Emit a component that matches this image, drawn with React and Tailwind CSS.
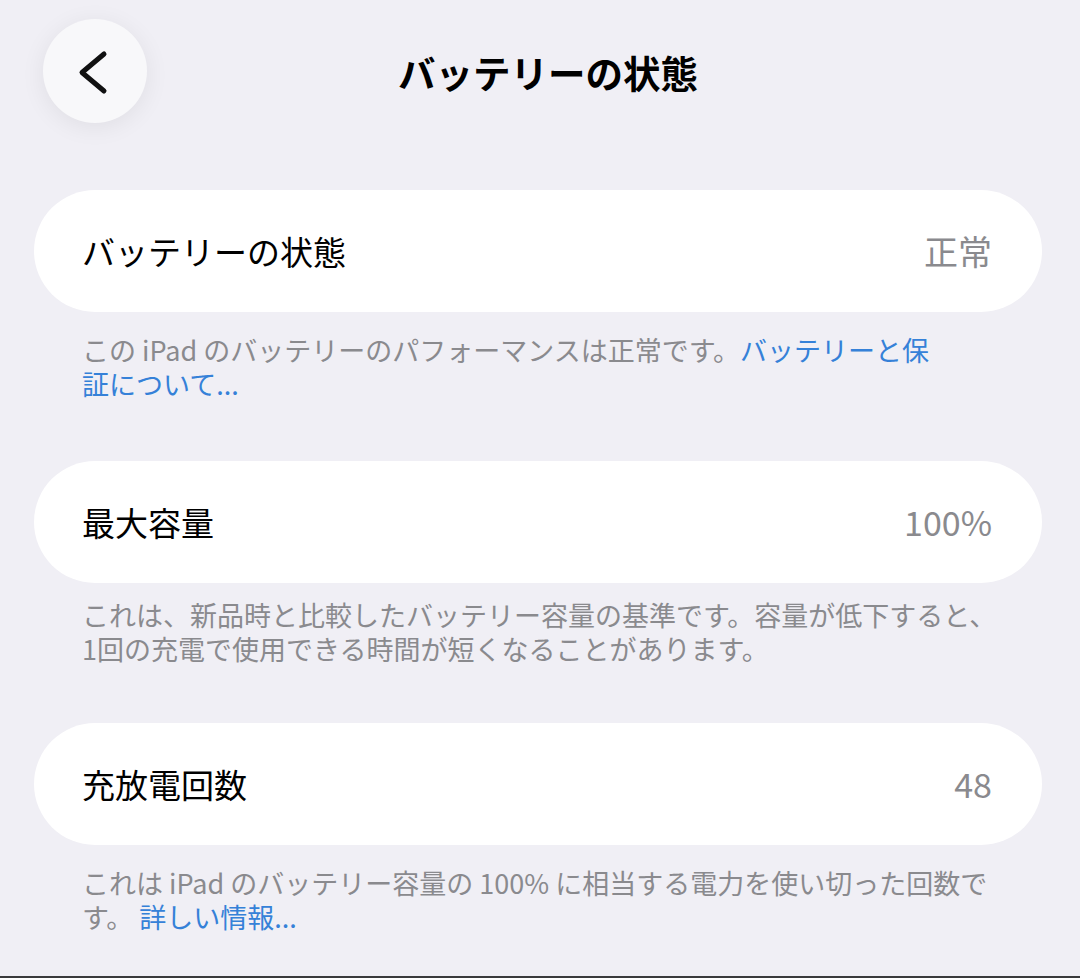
const FONT = "font-['Noto_Sans_CJK_JP','Noto_Sans',sans-serif]";

function Row({ label, value }) {
  return (
    <div className="flex h-[122px] items-center justify-between rounded-full bg-white pl-[48px] pr-[50px]">
      <span className="text-[33px] leading-none text-black">{label}</span>
      <span className="text-[34px] leading-none text-[#8a8a8e]">{value}</span>
    </div>
  );
}

function Note({ children, className = '' }) {
  return (
    <p className={`whitespace-nowrap pl-[48px] text-[27px] leading-[34px] text-[#8a8a8e] ${className}`}>
      {children}
    </p>
  );
}

export default function App() {
  return (
    <div className={`relative h-[978px] w-[1080px] overflow-hidden border-b-2 border-[#3a3a3c] bg-[#f0eff5] ${FONT}`}>
      {/* header */}
      <div className="relative flex h-[190px] items-start">
        <button className="ml-[43px] mt-[19px] flex h-[104px] w-[104px] items-center justify-center rounded-full bg-[#f8f8fa] shadow-[0_4px_24px_rgba(0,0,0,0.07)]">
          <svg width="104" height="104" viewBox="0 0 104 104" fill="none">
            <path d="M61 35 L39 53.5 L61 72" stroke="#111" strokeWidth="5" strokeLinecap="round" strokeLinejoin="round" />
          </svg>
        </button>
        <h1 className="absolute left-0 right-0 top-[49px] pl-[16px] text-center text-[37.5px] font-bold leading-[46px] text-black">
          バッテリーの状態
        </h1>
      </div>

      <div className="pl-[34px] pr-[38px]">
        <Row label="バッテリーの状態" value="正常" />
        <Note className="mt-[21px]">
          この iPad のバッテリーのパフォーマンスは正常です。<span className="text-[#3581d8]">バッテリーと保</span>
          <br />
          <span className="text-[#3581d8]">証について...</span>
        </Note>

        <div className="mt-[60px]">
          <Row label="最大容量" value="100%" />
        </div>
        <Note className="mt-[15px]">
          これは、新品時と比較したバッテリー容量の基準です。容量が低下すると、
          <br />
          1回の充電で使用できる時間が短くなることがあります。
        </Note>

        <div className="mt-[57px]">
          <Row label="充放電回数" value="48" />
        </div>
        <Note className="mt-[21px]">
          これは iPad のバッテリー容量の 100% に相当する電力を使い切った回数で
          <br />
          す。 <span className="text-[#3581d8]">詳しい情報...</span>
        </Note>
      </div>
    </div>
  );
}
